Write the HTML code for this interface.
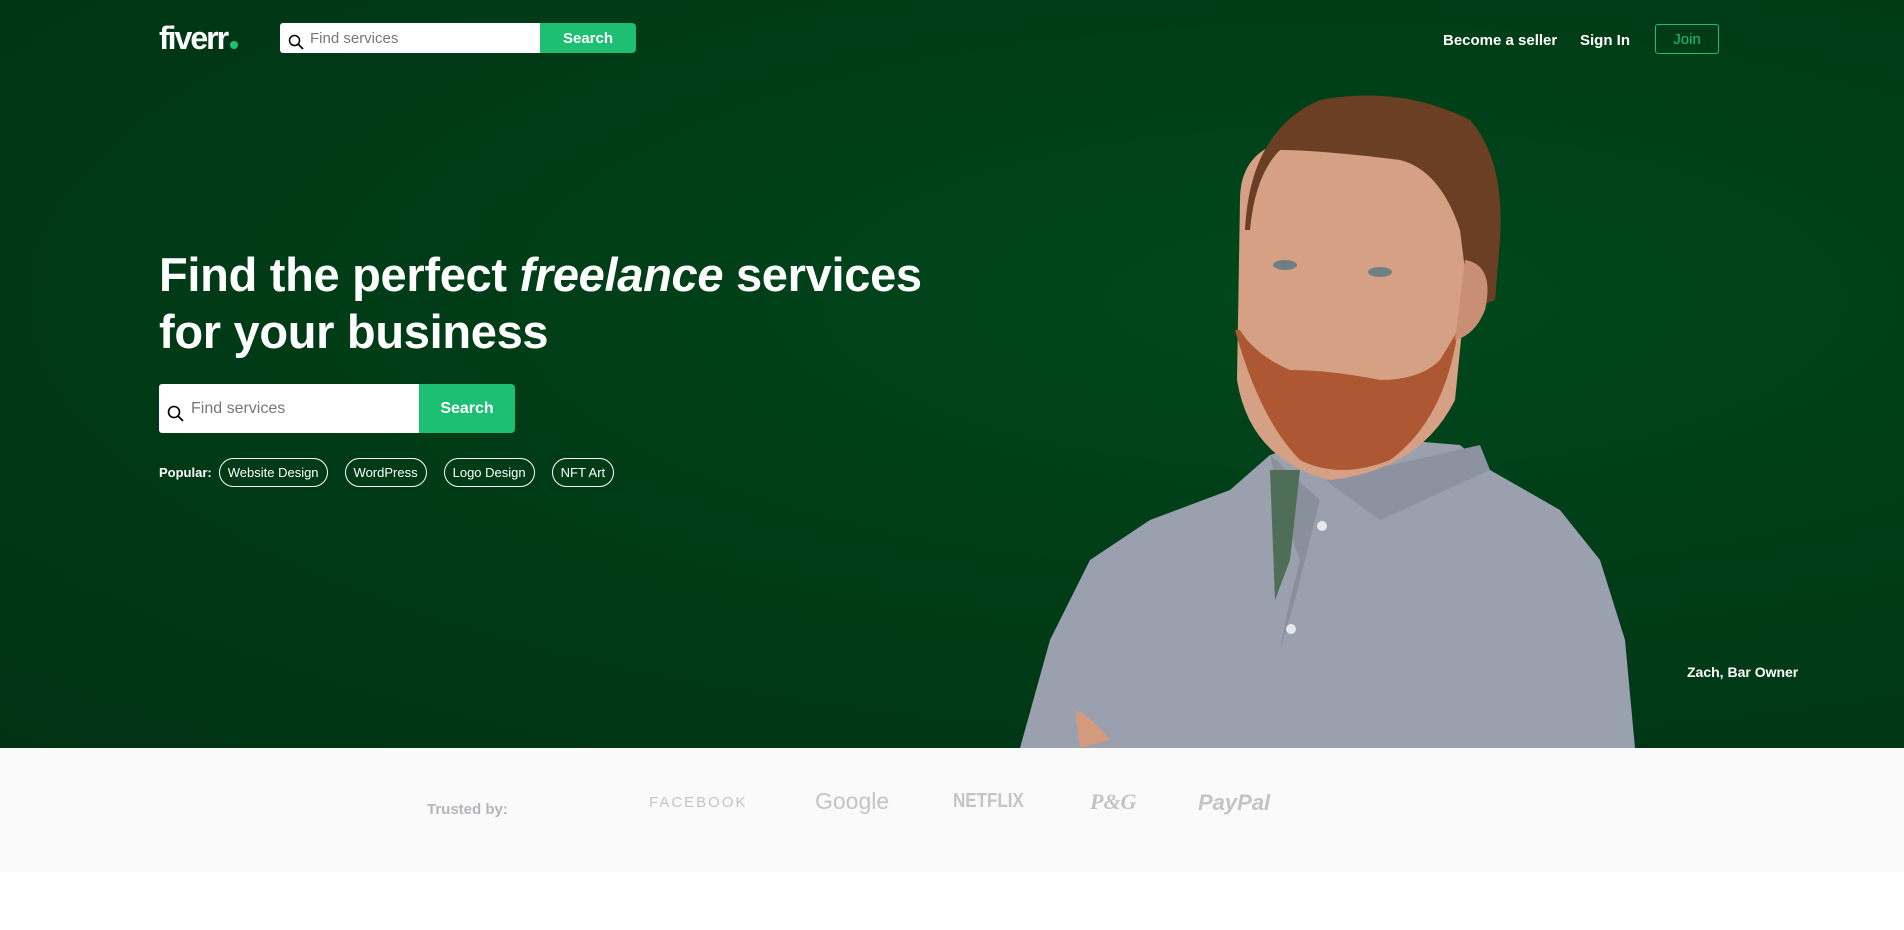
<!DOCTYPE html>
<html><head><meta charset="utf-8">
<style>
*{margin:0;padding:0;box-sizing:border-box}
body{width:1904px;height:930px;overflow:hidden;background:#fff;font-family:"Liberation Sans",sans-serif}
.hero{position:absolute;left:0;top:0;width:1904px;height:748px;background:radial-gradient(ellipse at 70% 40%,#00481c 0%,#003d17 45%,#003313 100%)}
.logo{position:absolute;left:159px;top:20px;color:#fff;font-weight:bold;font-size:32px;letter-spacing:-2px}
.logo span{display:inline-block;width:8px;height:8px;border-radius:50%;background:#1dbf73;margin-left:3px}
.sb{position:absolute;display:flex}
.sb .in{background:#fff;border-radius:3px 0 0 3px;display:flex;align-items:center;color:#777}
.sb .bt{background:#1dbf73;color:#fff;font-weight:bold;display:flex;align-items:center;justify-content:center;border-radius:0 4px 4px 0}
.nav{position:absolute;top:32px;color:#fff;font-weight:bold;font-size:15px}
.join{position:absolute;left:1655px;top:24px;width:64px;height:30px;border:1px solid #1dbf73;border-radius:3px;color:#1dbf73;font-size:15px;display:flex;align-items:center;justify-content:center}
h1{position:absolute;left:159px;top:246px;color:#fff;font-size:47px;line-height:57px;font-weight:bold;letter-spacing:-0.3px}
.pop{position:absolute;left:159px;top:458px;display:flex;align-items:center;color:#fff;font-size:13px;font-weight:bold}
.pop .c{border:1px solid #fff;border-radius:15px;height:29px;padding:0 8px;display:flex;align-items:center;margin-left:17px;font-weight:normal;font-size:13px}
.trust{position:absolute;left:0;top:748px;width:1904px;height:124px;background:#fafafa}
.t{position:absolute;color:#c4c4c4;font-weight:bold}
</style></head><body>
<div class="hero">
<svg width="1904" height="748" style="position:absolute;left:0;top:0">
<path d="M1020 748 L1050 640 L1090 560 L1150 520 L1230 490 L1270 455 L1320 440 L1400 440 L1460 445 L1490 470 L1560 510 L1600 560 L1625 640 L1635 748 Z" fill="#9aa0ae"/>
<path d="M1270 455 L1285 520 L1300 560 L1290 600 L1280 650 L1295 600 L1320 500 Z" fill="#8a8f9c"/>
<path d="M1270 470 L1300 470 L1290 560 L1275 600 Z" fill="#4f6e57"/>
<path d="M1325 480 L1480 445 L1490 470 L1380 520 Z" fill="#8d92a0"/>
<path d="M1075 710 Q1090 715 1110 740 L1080 748 Z" fill="#d39a7d"/>
<path d="M1240 200 Q1240 150 1290 140 L1440 150 Q1470 180 1465 300 L1455 400 Q1420 470 1330 480 Q1250 460 1237 380 Z" fill="#d6a084"/>
<path d="M1235 330 Q1260 420 1300 460 Q1340 480 1390 460 Q1445 420 1458 330 L1440 360 Q1420 380 1380 380 Q1330 370 1290 370 Q1255 355 1240 330 Z" fill="#ad5832"/>
<path d="M1245 230 Q1250 130 1320 100 Q1400 85 1470 120 Q1505 160 1500 240 L1495 300 L1470 310 L1460 230 Q1440 170 1400 160 Q1320 150 1280 150 Q1255 175 1250 230 Z" fill="#6b3f24"/>
<path d="M1465 260 Q1495 265 1485 310 Q1475 335 1455 340 Z" fill="#c98f74"/>
<ellipse cx="1285" cy="265" rx="12" ry="5" fill="#6d7f82"/><ellipse cx="1380" cy="272" rx="12" ry="5" fill="#6d7f82"/>
<circle cx="1322" cy="526" r="5" fill="#e8e8e8"/><circle cx="1291" cy="629" r="5" fill="#e8e8e8"/>
</svg>
<div class="logo">fiverr<span></span></div>
<div class="sb" style="left:280px;top:23px;height:30px">
 <div class="in" style="width:260px;font-size:15px;padding-left:8px"><svg width="16" height="16" style="margin:8px 6px 0 0"><circle cx="6.5" cy="6.5" r="5" fill="none" stroke="#000" stroke-width="1.5"/><path d="M10 10 L15 15" stroke="#000" stroke-width="1.8"/></svg>Find services</div>
 <div class="bt" style="width:96px;font-size:15px">Search</div>
</div>
<div class="nav" style="left:1443px">Become a seller</div>
<div class="nav" style="left:1580px">Sign In</div>
<div class="join">Join</div>
<h1>Find the perfect <i>freelance</i> services<br>for your business</h1>
<div class="sb" style="left:159px;top:384px;height:49px">
 <div class="in" style="width:260px;font-size:16px;padding-left:8px"><svg width="18" height="18" style="margin:10px 6px 0 0"><circle cx="7" cy="7" r="5.5" fill="none" stroke="#000" stroke-width="1.6"/><path d="M11 11 L16 16" stroke="#000" stroke-width="1.8"/></svg>Find services</div>
 <div class="bt" style="width:96px;font-size:16px">Search</div>
</div>
<div class="pop">Popular:<div class="c" style="margin-left:7px">Website Design</div><div class="c">WordPress</div><div class="c">Logo Design</div><div class="c">NFT Art</div></div>
<div style="position:absolute;left:1687px;top:664px;color:#fff;font-weight:bold;font-size:14px">Zach, Bar Owner</div>
</div>
<div class="trust">
<div class="t" style="left:427px;top:53px;font-size:15px;color:#b5b6ba">Trusted by:</div>
<div class="t" style="left:649px;top:46px;font-size:15px;letter-spacing:2px;font-weight:normal">FACEBOOK</div>
<div class="t" style="left:815px;top:40px;font-size:23px;font-weight:normal">Google</div>
<div class="t" style="left:953px;top:42px;font-size:20px;transform:scaleX(0.85);transform-origin:left">NETFLIX</div>
<div class="t" style="left:1090px;top:41px;font-size:22px;font-style:italic;font-family:'Liberation Serif',serif">P&amp;G</div>
<div class="t" style="left:1198px;top:42px;font-size:22px;font-style:italic">PayPal</div>
</div>
</body></html>
